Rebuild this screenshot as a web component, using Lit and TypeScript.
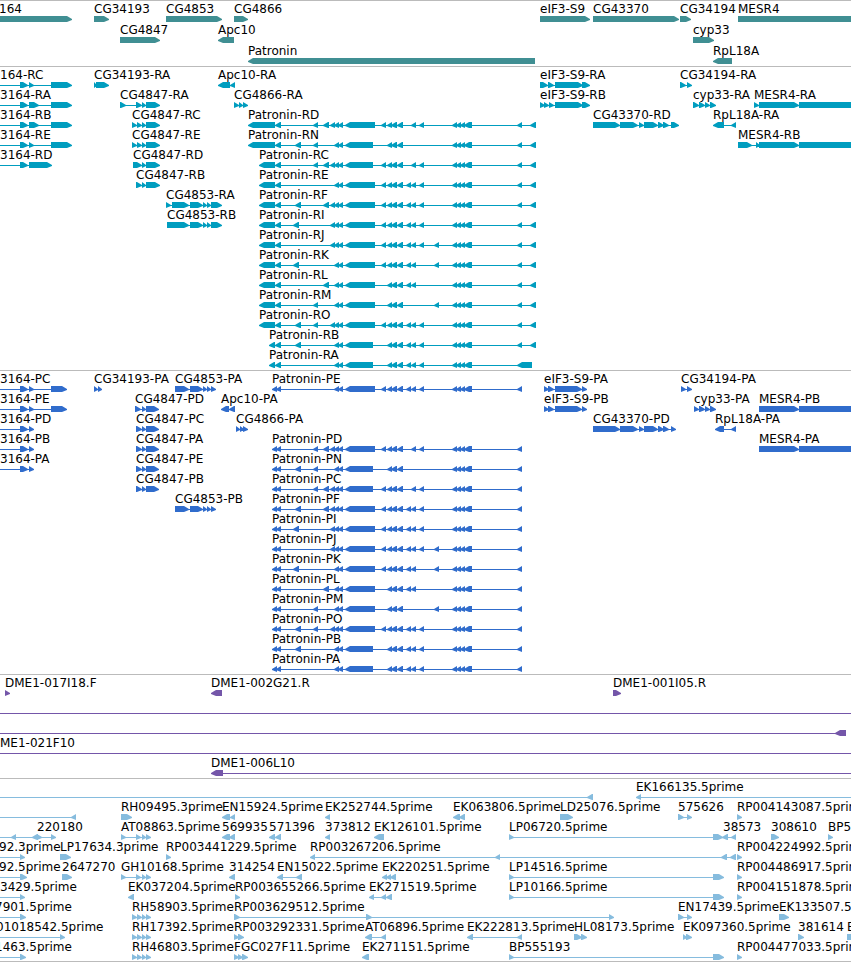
import { LitElement, html, svg, css } from "lit";
import { customElement, property } from "lit/decorators.js";

type Strand = "+" | "-";
/** label, start position, strand, blocks as [start, end] pairs */
type Feature = [string, number, Strand, number[][]];
type Row = Feature[];

const LEFT = -40;
const RIGHT = 4000;

const BODY = 14;
const MID = 17;
const FOOT = 20;
const HEAD = 5;

// Exons of the Patronin gene, keyed by letter.
const PATRONIN: Record<string, number[][]> = {
  a: [[293, 299]],
  b: [[295, 301]],
  c: [[313, 318]],
  d: [[323, 329]],
  e: [[330, 335]],
  f: [[334, 339]],
  g: [[338, 343]],
  L: [[345, 375]],
  S: [[345, 373]],
  h: [[381, 386]],
  i: [[387, 392], [391, 397]],
  k: [[397, 403]],
  l: [[406, 411]],
  m: [[411, 416]],
  n: [[419, 424]],
  o: [[434, 439]],
};
const CLUSTER = [[452, 457], [456, 461], [460, 465], [464, 472]];

const ISOFORMS: Record<string, string> = {
  D: "cdefgLhikmn",
  N: "bcfgSik",
  C: "cdefgShikmn",
  E: "fgLhiklmn",
  F: "bdefgLhiklmn",
  I: "aefgLhiklmn",
  J: "efgLhiklmno",
  K: "afgLhiklmo",
  L: "dfgLiklm",
  M: "cfgLiko",
  O: "bcefgLhiklmn",
  B: "bfgSiklmn",
  A: "fgSiklmn",
};

const inner = (id: string) => [...ISOFORMS[id]].flatMap((k) => PATRONIN[k]);

const patR = (id: string, start: number): Feature => [
  `Patronin-R${id}`, start, "-",
  [[start, 275], [275, 281], ...inner(id), ...CLUSTER,
    ...(id === "A" ? [[517, 532]] : [[517, 522], [530, 536]])],
];
const patP = (id: string): Feature => [
  `Patronin-P${id}`, 272, "-",
  [[272, 277], [276, 281], ...inner(id), ...CLUSTER, [517, 522]],
];

const off = [LEFT, LEFT + 10];
const tail4847 = [[142, 146], [146, 160]];
const tail4847p = [[136, 142], [142, 146], [146, 159]];
const tail4853 = [[190, 203], [203, 207], [207, 211], [211, 222]];
const p4853 = [[175, 189], [190, 203], [203, 207], [207, 211], [211, 216]];
const p3s9 = [[544, 549], [548, 554], [555, 582], [582, 587]];
const cypR = [[693, 699], [699, 705], [705, 710], [710, 716]];
const c43370 = [[593, 620], [620, 638], [639, 644], [644, 658], [658, 664], [663, 669]];
const est4 = [[132, 137], [137, 142], [142, 146], [146, 151]];
const est121 = [[121, 126], [136, 141], [142, 146], [146, 151]];
const rp = (label: string): Feature => [label, 737, "+", [[737, 742]]];

const GENES: Row[] = [
  [
    ["164", -1, "+", [[LEFT, 72]]],
    ["CG34193", 94, "+", [[94, 109]]],
    ["CG4853", 166, "+", [[166, 222]]],
    ["CG4866", 234, "+", [[234, 248]]],
    ["eIF3-S9", 540, "+", [[540, 590]]],
    ["CG43370", 593, "+", [[593, 679]]],
    ["CG34194", 680, "+", [[680, 691]]],
    ["MESR4", 738, "+", [[738, RIGHT]]],
  ],
  [
    ["CG4847", 120, "+", [[120, 160]]],
    ["Apc10", 218, "-", [[218, 234]]],
    ["cyp33", 693, "+", [[693, 714]]],
  ],
  [
    ["Patronin", 248, "-", [[248, 535]]],
    ["RpL18A", 713, "-", [[713, 732]]],
  ],
];

const TRANSCRIPTS: Row[] = [
  [
    ["164-RC", 0, "+", [off, [20, 28], [29, 34], [51, 72]]],
    ["CG34193-RA", 94, "+", [[94, 97], [96, 109]]],
    ["Apc10-RA", 218, "-", [[218, 230], [230, 235]]],
    ["eIF3-S9-RA", 540, "+", [[540, 548], [548, 554], [555, 583], [582, 590]]],
    ["CG34194-RA", 680, "+", [[680, 686], [687, 692]]],
  ],
  [
    ["3164-RA", 0, "+", [off, [20, 28], [29, 39], [51, 72]]],
    ["CG4847-RA", 120, "+", [[120, 126], [136, 142], ...tail4847]],
    ["CG4866-RA", 234, "+", [[234, 239], [239, 243], [243, 248]]],
    ["eIF3-S9-RB", 540, "+", [[540, 545], [544, 549], [549, 554], [555, 583], [582, 590]]],
    ["cyp33-RA", 693, "+", cypR],
    ["MESR4-RA", 754, "+", [[754, 759], [759, 799], [799, RIGHT]]],
  ],
  [
    ["3164-RB", 0, "+", [off, [20, 28], [29, 39], [51, 72]]],
    ["CG4847-RC", 132, "+", [[132, 137], [137, 142], ...tail4847]],
    patR("D", 248),
    ["CG43370-RD", 593, "+", [...c43370, [671, 679]]],
    ["RpL18A-RA", 713, "-", [[713, 724], [731, 736]]],
  ],
  [
    ["3164-RE", 0, "+", [off, [20, 28], [29, 34], [51, 72]]],
    ["CG4847-RE", 132, "+", [[132, 137], [137, 142], ...tail4847]],
    patR("N", 248),
    ["MESR4-RB", 738, "+", [[738, 752], [756, 760], [759, 799], [799, RIGHT]]],
  ],
  [
    ["3164-RD", 0, "+", [off, [20, 28], [29, 52]]],
    ["CG4847-RD", 133, "+", [[133, 142], ...tail4847]],
    patR("C", 259),
  ],
  [["CG4847-RB", 136, "+", [[136, 142], ...tail4847]], patR("E", 259)],
  [["CG4853-RA", 166, "+", [[166, 171], [172, 189], ...tail4853]], patR("F", 259)],
  [["CG4853-RB", 167, "+", [[167, 189], ...tail4853]], patR("I", 259)],
  [patR("J", 259)],
  [patR("K", 259)],
  [patR("L", 259)],
  [patR("M", 259)],
  [patR("O", 259)],
  [patR("B", 269)],
  [patR("A", 269)],
];

const PROTEINS: Row[] = [
  [
    ["3164-PC", 0, "+", [off, [20, 28], [29, 34], [51, 67]]],
    ["CG34193-PA", 94, "+", [[94, 98], [98, 102]]],
    ["CG4853-PA", 175, "+", p4853],
    patP("E"),
    ["eIF3-S9-PA", 544, "+", p3s9],
    ["CG34194-PA", 681, "+", [[681, 686], [687, 692]]],
  ],
  [
    ["3164-PE", 0, "+", [off, [20, 28], [29, 34], [51, 67]]],
    ["CG4847-PD", 135, "+", [[135, 141], [142, 146], [146, 159]]],
    ["Apc10-PA", 221, "-", [[221, 229], [229, 235]]],
    ["eIF3-S9-PB", 544, "+", p3s9],
    ["cyp33-PA", 694, "+", [[694, 699], ...cypR.slice(1)]],
    ["MESR4-PB", 759, "+", [[759, 799], [799, RIGHT]]],
  ],
  [
    ["3164-PD", 0, "+", [off, [20, 28], [29, 34]]],
    ["CG4847-PC", 136, "+", tail4847p],
    ["CG4866-PA", 236, "+", [[236, 240], [240, 244], [243, 248]]],
    ["CG43370-PD", 593, "+", [...c43370, [671, 676]]],
    ["RpL18A-PA", 715, "-", [[715, 724], [731, 736]]],
  ],
  [
    ["3164-PB", 0, "+", [off, [20, 28], [29, 34]]],
    ["CG4847-PA", 136, "+", tail4847p],
    patP("D"),
    ["MESR4-PA", 759, "+", [[759, 799], [799, RIGHT]]],
  ],
  [
    ["3164-PA", 0, "+", [off, [20, 28], [29, 34]]],
    ["CG4847-PE", 136, "+", tail4847p],
    patP("N"),
  ],
  [["CG4847-PB", 136, "+", tail4847p], patP("C")],
  [["CG4853-PB", 175, "+", p4853], patP("F")],
  [patP("I")],
  [patP("J")],
  [patP("K")],
  [patP("L")],
  [patP("M")],
  [patP("O")],
  [patP("B")],
  [patP("A")],
];

const CLONES: Row[] = [
  [
    ["DME1-017I18.F", 5, "+", [[5, 10]]],
    ["DME1-002G21.R", 211, "-", [[211, 222]]],
    ["DME1-001I05.R", 613, "+", [[613, 621]]],
  ],
  [["", 0, "+", [off, [RIGHT, RIGHT + 9]]]],
  [["", 0, "-", [off, [835, 846]]]],
  [["ME1-021F10", 0, "+", [off, [RIGHT, RIGHT + 9]]]],
  [["DME1-006L10", 211, "-", [[211, 223], [RIGHT, RIGHT + 9]]]],
];

const ESTS: Row[] = [
  [
    ["", 0, "-", [off, [587, 593]]],
    ["EK166135.5prime", 636, "-", [[636, 641], [RIGHT, RIGHT + 9]]],
  ],
  [
    ["", 0, "-", [off, [71, 76]]],
    ["RH09495.3prime", 121, "+", [[121, 132]]],
    ["EN15924.5prime", 222, "-", [[222, 230], [230, 235]]],
    ["EK252744.5prime", 325, "-", [[325, 330]]],
    ["EK063806.5prime", 453, "-", [[453, 460], [459, 465]]],
    ["LD25076.5prime", 560, "+", [[560, 573]]],
    ["575626", 678, "+", [[678, 684], [687, 692]]],
    rp("RP004143087.5prime"),
  ],
  [
    ["", 0, "-", [off, [11, 16], [32, 38]]],
    ["220180", 37, "+", [[37, 42], [51, 56]]],
    ["AT08863.5prime", 121, "+", est121],
    ["569935", 222, "-", [[222, 230], [229, 235]]],
    ["571396", 269, "-", [[269, 275], [275, 281]]],
    ["373812", 325, "-", [[325, 330]]],
    ["EK126101.5prime", 374, "-", [[374, 384]]],
    ["LP06720.5prime", 509, "+", [[509, 514], [713, 723]]],
    ["38573", 723, "-", [[722, 728], [731, 736]]],
    ["308610", 771, "+", [[771, 779]]],
    ["BP5", 828, "+", [[828, 833]]],
  ],
  [
    ["92.3prime", -1, "+", [off, [20, 25]]],
    ["LP17634.3prime", 60, "+", [[60, 71]]],
    ["RP003441229.5prime", 166, "+", [[166, 171]]],
    ["RP003267206.5prime", 310, "-", [[310, 315], [495, 500], [721, 727], [730, 736]]],
    rp("RP004224992.5prime"),
  ],
  [
    ["92.5prime", -1, "+", [off, [20, 27]]],
    ["2647270", 62, "+", [[62, 72]]],
    ["GH10168.5prime", 121, "+", est121],
    ["314254", 229, "-", [[229, 235]]],
    ["EN15022.5prime", 277, "-", [[277, 283], [296, 302]]],
    ["EK220251.5prime", 382, "-", [[382, 387], [386, 391], [390, 396]]],
    ["LP14516.5prime", 509, "+", [[509, 514], [713, 724]]],
    rp("RP004486917.5prime"),
  ],
  [
    ["3429.5prime", 0, "+", [off, [20, 25]]],
    ["EK037204.5prime", 128, "-", [[128, 134]]],
    ["RP003655266.5prime", 235, "+", [[235, 240]]],
    ["EK271519.5prime", 369, "-", [[369, 374], [381, 386], [386, 392]]],
    ["LP10166.5prime", 509, "+", [[509, 514], [713, 724]]],
    rp("RP004151878.5prime"),
  ],
  [
    ["7901.5prime", -5, "+", [off, [20, 26]]],
    ["RH58903.5prime", 132, "+", est4],
    ["RP003629512.5prime", 234, "+", [[234, 240], [366, 372], [609, 614]]],
    ["EN17439.5prime", 678, "+", [[678, 684], [687, 692]]],
    ["EK133507.5prime", 779, "+", [[779, 789]]],
  ],
  [
    ["01018542.5prime", -4, "+", [off, [60, 65]]],
    ["RH17392.5prime", 132, "+", est4],
    ["RP003292331.5prime", 234, "+", [[234, 239], [238, 244]]],
    ["AT06896.5prime", 365, "-", [[365, 372], [381, 386]]],
    ["EK222813.5prime", 467, "-", [[467, 473], [517, 522]]],
    ["HL08173.5prime", 574, "+", [[574, 582], [581, 587]]],
    ["EK097360.5prime", 683, "+", [[683, 687], [686, 692]]],
    ["381614", 798, "+", [[798, 804]]],
    ["E", 847, "+", [[847, 860]]],
  ],
  [
    ["1463.5prime", -5, "+", [off, [20, 26]]],
    ["RH46803.5prime", 132, "+", est4],
    ["FGC027F11.5prime", 234, "+", [[234, 239], [238, 243], [242, 248]]],
    ["EK271151.5prime", 362, "-", [[362, 369]]],
    ["BP555193", 509, "+", [[509, 514], [713, 724]]],
    rp("RP004477033.5prime"),
  ],
];

/** Outline of one block, tapered to a blunt tip on the side it is read towards. */
function block([a, b]: number[], strand: Strand): string {
  const head = Math.min(HEAD, b - a);
  return strand === "+"
    ? `M${a} ${BODY}H${b - head}L${b} ${MID}V${MID + 1}L${b - head} ${FOOT}H${a}Z`
    : `M${b} ${BODY}H${a + head}L${a} ${MID}V${MID + 1}L${a + head} ${FOOT}H${b}Z`;
}

@customElement("genome-track")
export class GenomeTrack extends LitElement {
  @property({ attribute: false }) rows: Row[] = [];

  static styles = css`
    :host {
      display: block;
      border-top: 1px solid #bbbbbb;
      padding: 1px 0 2px;
    }
    .row {
      position: relative;
      height: 20px;
    }
    :host(.genes) {
      padding-bottom: 1px;
    }
    :host(.genes) .row {
      height: 21px;
    }
    :host(.ests) {
      padding-bottom: 1px;
      border-bottom: 1px solid #bbbbbb;
    }
    .glyphs {
      display: block;
      width: 100%;
      height: 20px;
      fill: currentColor;
    }
    .label {
      position: absolute;
      top: 0;
      line-height: 14px;
      color: #000000;
      white-space: nowrap;
    }
  `;

  private glyph([, , strand, blocks]: Feature) {
    const from = blocks[0][0];
    const to = blocks[blocks.length - 1][1];
    return svg`
      ${blocks.length > 1
        ? svg`<rect x=${from} y=${MID} width=${to - from} height="1"></rect>`
        : null}
      <path d=${blocks.map((b) => block(b, strand)).join("")}></path>`;
  }

  render() {
    return this.rows.map(
      (row) => html`<div class="row">
        <svg class="glyphs" aria-hidden="true">${row.map((f) => this.glyph(f))}</svg>
        ${row.map(([label, x]) =>
          label ? html`<span class="label" style="left:${x}px">${label}</span>` : null
        )}
      </div>`
    );
  }
}

@customElement("app-root")
export class AppRoot extends LitElement {
  static styles = css`
    :host {
      display: block;
      overflow: hidden;
      background: #ffffff;
      font-family: "DejaVu Sans", Verdana, sans-serif;
      font-size: 12px;
    }
    .genes {
      color: #408f93;
    }
    .transcripts {
      color: #009dbf;
    }
    .proteins {
      color: #306ccc;
    }
    .clones {
      color: #7456a9;
    }
    .ests {
      color: #86bcde;
    }
  `;

  render() {
    return html`<main>
      <genome-track class="genes" .rows=${GENES}></genome-track>
      <genome-track class="transcripts" .rows=${TRANSCRIPTS}></genome-track>
      <genome-track class="proteins" .rows=${PROTEINS}></genome-track>
      <genome-track class="clones" .rows=${CLONES}></genome-track>
      <genome-track class="ests" .rows=${ESTS}></genome-track>
    </main>`;
  }
}
